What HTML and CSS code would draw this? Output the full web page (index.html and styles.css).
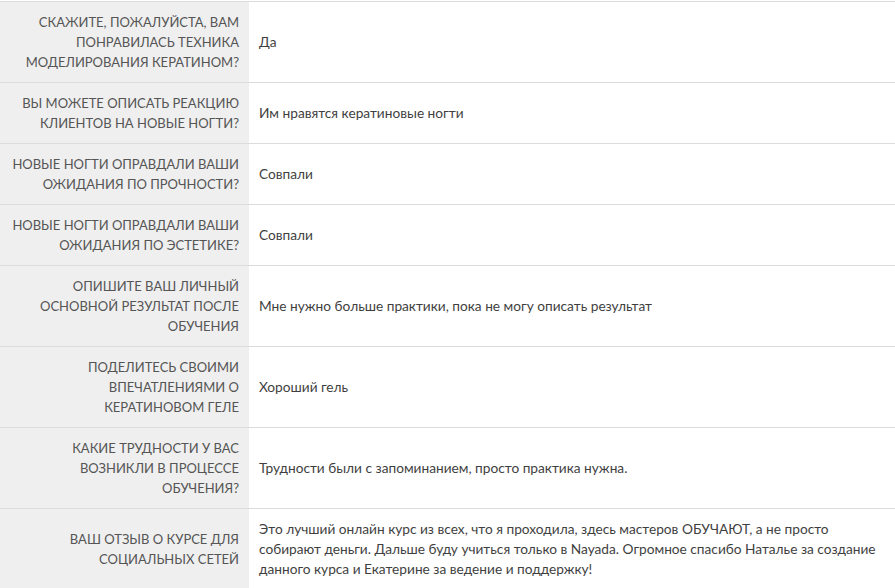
FILE: index.html
```html
<!DOCTYPE html>
<html lang="ru">
<head>
<meta charset="utf-8">
<link rel="stylesheet" href="styles.css">
</head>
<body>
<div class="page">
  <table class="answers">
    <colgroup>
      <col class="col-q">
      <col class="col-a">
    </colgroup>
    <tr>
      <th>Скажите, пожалуйста, вам понравилась техника моделирования кератином?</th>
      <td>Да</td>
    </tr>
    <tr>
      <th>Вы можете описать реакцию клиентов на новые ногти?</th>
      <td>Им нравятся кератиновые ногти</td>
    </tr>
    <tr>
      <th>Новые ногти оправдали ваши ожидания по прочности?</th>
      <td>Совпали</td>
    </tr>
    <tr>
      <th>Новые ногти оправдали ваши ожидания по эстетике?</th>
      <td>Совпали</td>
    </tr>
    <tr>
      <th>Опишите ваш личный основной результат после обучения</th>
      <td>Мне нужно больше практики, пока не могу описать результат</td>
    </tr>
    <tr>
      <th>Поделитесь своими впечатлениями о кератиновом геле</th>
      <td>Хороший гель</td>
    </tr>
    <tr>
      <th>Какие трудности у вас возникли в процессе обучения?</th>
      <td>Трудности были с запоминанием, просто практика нужна.</td>
    </tr>
    <tr>
      <th>Ваш отзыв о курсе для социальных сетей</th>
      <td>Это лучший онлайн курс из всех, что я проходила, здесь мастеров ОБУЧАЮТ, а не просто<br>собирают деньги. Дальше буду учиться только в Nayada. Огромное спасибо Наталье за создание<br>данного курса и Екатерине за ведение и поддержку!</td>
    </tr>
  </table>
</div>
</body>
</html>
```

FILE: styles.css
```css
html, body {
  margin: 0;
  padding: 0;
  background: #ffffff;
}

.page {
  padding-top: 1px;
  font-family: Lato, "Liberation Sans", sans-serif;
  line-height: 20px;
}

.answers {
  width: 100%;
  table-layout: fixed;
  border-collapse: collapse;
  border-top: 1px solid #dcdcdc;
}

.col-q {
  width: 249px;
}

.answers tr {
  border-bottom: 1px solid #dcdcdc;
}

.answers th {
  padding: 10px 10px;
  background: #efefef;
  color: #555555;
  font-size: 13px;
  font-weight: normal;
  text-align: right;
  text-transform: uppercase;
  vertical-align: middle;
}

.answers td {
  padding: 10px 10px;
  color: #3f3f3f;
  font-size: 13.7px;
  text-align: left;
  vertical-align: middle;
  white-space: nowrap;
}
```
